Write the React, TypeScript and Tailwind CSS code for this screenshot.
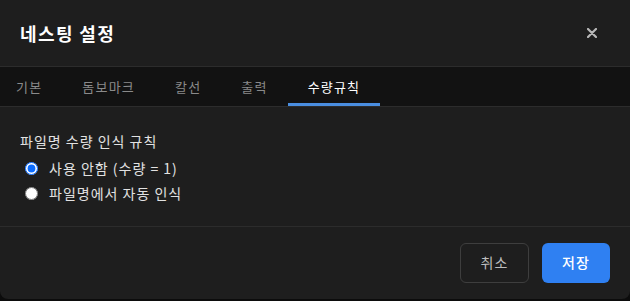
import { useState } from "react";

const tabs = ["기본", "돔보마크", "칼선", "출력", "수량규칙"];

export default function App() {
  const [active, setActive] = useState(4);
  const [rule, setRule] = useState("none");

  return (
    <div
      className="w-[630px] h-[301px] bg-[#0c0c0c]"
      style={{ fontFamily: '"Noto Sans CJK KR", "Noto Sans", sans-serif' }}
    >
      <div className="flex h-[299px] flex-col overflow-hidden rounded-b-lg bg-[#1e1e1e]">
        {/* Header */}
        <div className="flex h-[67px] shrink-0 items-center justify-between border-b border-[#2c2c2c] pl-5 pr-[30px]">
          <h2 className="text-[18px] font-bold leading-none tracking-[1.4px] text-white">네스팅 설정</h2>
          <button className="flex h-4 w-4 items-center justify-center text-[#b8b8b8]">
            <svg width="10" height="10" viewBox="0 0 10 10">
              <path d="M1 1L9 9M9 1L1 9" stroke="currentColor" strokeWidth="2.2" strokeLinecap="round" />
            </svg>
          </button>
        </div>

        {/* Tabs */}
        <div className="flex h-[40px] shrink-0 border-b border-[#2c2c2c] bg-[#121212]">
          {tabs.map((t, i) => (
            <button
              key={t}
              onClick={() => setActive(i)}
              className={`relative flex items-center text-[13px] tracking-[1.2px] ${i === 0 ? "pl-4 pr-5" : "px-5"} ${
                i === active ? "text-white" : "text-[#8a8a8a]"
              }`}
            >
              {t}
              {i === active && <span className="absolute inset-x-0 bottom-0 h-[3px] bg-[#4a8ee0]" />}
            </button>
          ))}
        </div>

        {/* Content */}
        <div className="flex flex-1 flex-col border-b border-[#2c2c2c] px-5 pt-[25px]">
          <div className="text-[14px] leading-[18px] tracking-[1px] text-[#e2e2e2]">파일명 수량 인식 규칙</div>
          <div className="mt-[9px] flex flex-col gap-[7px] pl-[5px]">
            {[
              { v: "none", l: "사용 안함 (수량 = 1)" },
              { v: "auto", l: "파일명에서 자동 인식" },
            ].map((o) => (
              <label
                key={o.v}
                className="flex h-[18px] cursor-pointer items-center gap-[11px] text-[14px] tracking-[1px] text-[#e2e2e2]"
              >
                <input
                  type="radio"
                  name="rule"
                  checked={rule === o.v}
                  onChange={() => setRule(o.v)}
                  className="m-0 h-[13px] w-[13px] accent-[#0b6cff]"
                />
                {o.l}
              </label>
            ))}
          </div>
        </div>

        {/* Footer */}
        <div className="flex h-[72px] shrink-0 items-center justify-end gap-[13px] px-5 pb-px">
          <button className="h-10 w-[69px] rounded-md border border-[#3e3e3e] text-[14px] tracking-[1px] text-[#bdbdbd]">
            취소
          </button>
          <button className="h-10 w-[68px] rounded-md bg-[#2f80f2] text-[14px] font-medium tracking-[1px] text-white">
            저장
          </button>
        </div>
      </div>
    </div>
  );
}
